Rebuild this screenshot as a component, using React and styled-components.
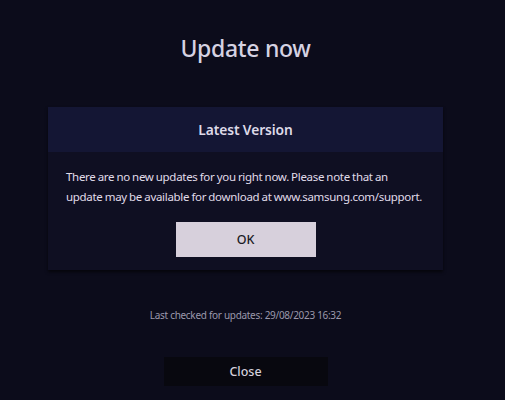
import React from 'react'
import styled, { createGlobalStyle } from 'styled-components'

const Global = createGlobalStyle`
  html, body {
    margin: 0;
    padding: 0;
    background: #0c0c1b;
  }
  body {
    font-family: "Noto Sans", "Open Sans", sans-serif;
  }
`

const Screen = styled.div`
  width: 491px;
  height: 400px;
  padding-right: 14px;
  background: #0c0c1b;
  display: flex;
  flex-direction: column;
  align-items: center;
  overflow: hidden;
`

const Title = styled.h1`
  margin: 33px 0 0;
  height: 30px;
  font-size: 23px;
  font-weight: 500;
  line-height: 30px;
  color: #d6d2e2;
  letter-spacing: -0.3px;
`

const Dialog = styled.div`
  margin-top: 44px;
  width: 395px;
  background: #0f0f22;
  box-shadow: 0 2px 3px rgba(0, 0, 0, 0.6);
  display: flex;
  flex-direction: column;
`

const DialogHeader = styled.div`
  height: 45px;
  background: #141634;
  display: flex;
  align-items: center;
  justify-content: center;
  font-size: 13.8px;
  font-weight: 600;
  color: #dedae8;
  letter-spacing: -0.1px;
`

const Message = styled.p`
  margin: 15px 0 0;
  padding: 0 18px;
  font-size: 11.5px;
  line-height: 20px;
  color: #e0dcea;
  letter-spacing: -0.3px;
  word-spacing: -0.5px;
`

const Button = styled.button`
  display: flex;
  align-items: center;
  justify-content: center;
  border: none;
  padding: 0;
  font-family: inherit;
  cursor: pointer;
  width: ${p => p.$w}px;
  height: ${p => p.$h}px;
  background: ${p => (p.$focused ? '#d7d0dc' : '#08080f')};
  color: ${p => (p.$focused ? '#1a1a24' : '#d4d0dc')};
  font-size: 12.5px;
  font-weight: 500;
`

const ButtonRow = styled.div`
  display: flex;
  justify-content: center;
  padding: 15px 0 13px;
`

const Status = styled.div`
  margin-top: 38px;
  font-size: 10px;
  color: #9b98ab;
  letter-spacing: -0.3px;
`

const Footer = styled.div`
  margin-top: 35px;
`

export default function App() {
  return (
    <>
      <Global />
      <Screen>
        <Title>Update now</Title>
        <Dialog>
          <DialogHeader>Latest Version</DialogHeader>
          <Message>
            There are no new updates for you right now. Please note that an
            update may be available for download at www.samsung.com/support.
          </Message>
          <ButtonRow>
            <Button $focused $w={140} $h={35}>OK</Button>
          </ButtonRow>
        </Dialog>
        <Status>Last checked for updates: 29/08/2023 16:32</Status>
        <Footer>
          <Button $w={164} $h={29}>Close</Button>
        </Footer>
      </Screen>
    </>
  )
}
